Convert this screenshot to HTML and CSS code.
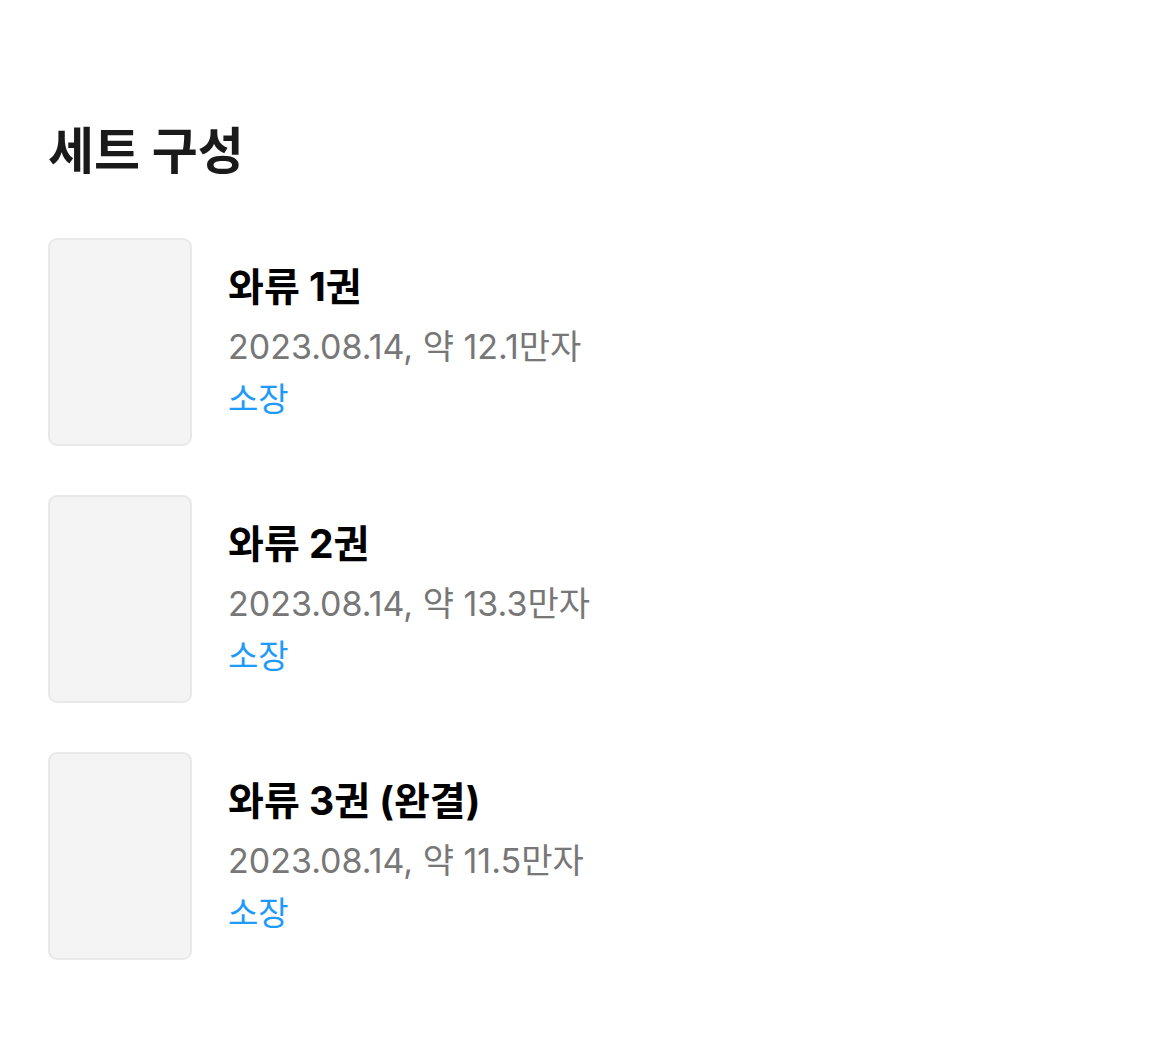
FILE: index.html
```html
<!DOCTYPE html>
<html lang="ko">
<head>
<meta charset="utf-8">
<link rel="stylesheet" href="styles.css">
</head>
<body>
<section class="set">
  <h2 class="set-title">세트 구성</h2>
  <ul class="list">
    <li class="item">
      <div class="thumb"></div>
      <div class="info">
        <div class="name">와류 1권</div>
        <div class="meta">2023.08.14, 약 12.1만자</div>
        <div class="owned">소장</div>
      </div>
    </li>
    <li class="item">
      <div class="thumb"></div>
      <div class="info">
        <div class="name">와류 2권</div>
        <div class="meta">2023.08.14, 약 13.3만자</div>
        <div class="owned">소장</div>
      </div>
    </li>
    <li class="item">
      <div class="thumb"></div>
      <div class="info">
        <div class="name">와류 3권 (완결)</div>
        <div class="meta">2023.08.14, 약 11.5만자</div>
        <div class="owned">소장</div>
      </div>
    </li>
  </ul>
</section>
</body>
</html>
```
FILE: styles.css
```css
html, body {
  margin: 0;
  background: #fff;
}
body {
  font-family: Inter, "Noto Sans CJK KR", sans-serif;
}
.set {
  padding: 111px 48px 0 48px;
}
.set-title {
  margin: 0;
  font-size: 50px;
  line-height: 80px;
  font-weight: 700;
  color: #1a1a1a;
}
.list {
  list-style: none;
  margin: 0;
  padding: 0;
  margin-top: 47px;
  display: flex;
  flex-direction: column;
  gap: 49px;
}
.item {
  display: flex;
  align-items: center;
  gap: 36px;
}
.thumb {
  width: 140px;
  height: 204px;
  background: #f4f4f4;
  border: 2px solid #e9e9e9;
  border-radius: 9px;
  flex: none;
}
.info {
  display: flex;
  flex-direction: column;
  padding-bottom: 6px;
}
.name {
  font-size: 39px;
  font-weight: 700;
  line-height: 64px;
  color: #000;
}
.meta {
  font-size: 34px;
  line-height: 56px;
  color: #777;
}
.owned {
  font-size: 33px;
  line-height: 48px;
  color: #1e9bfa;
}
```
